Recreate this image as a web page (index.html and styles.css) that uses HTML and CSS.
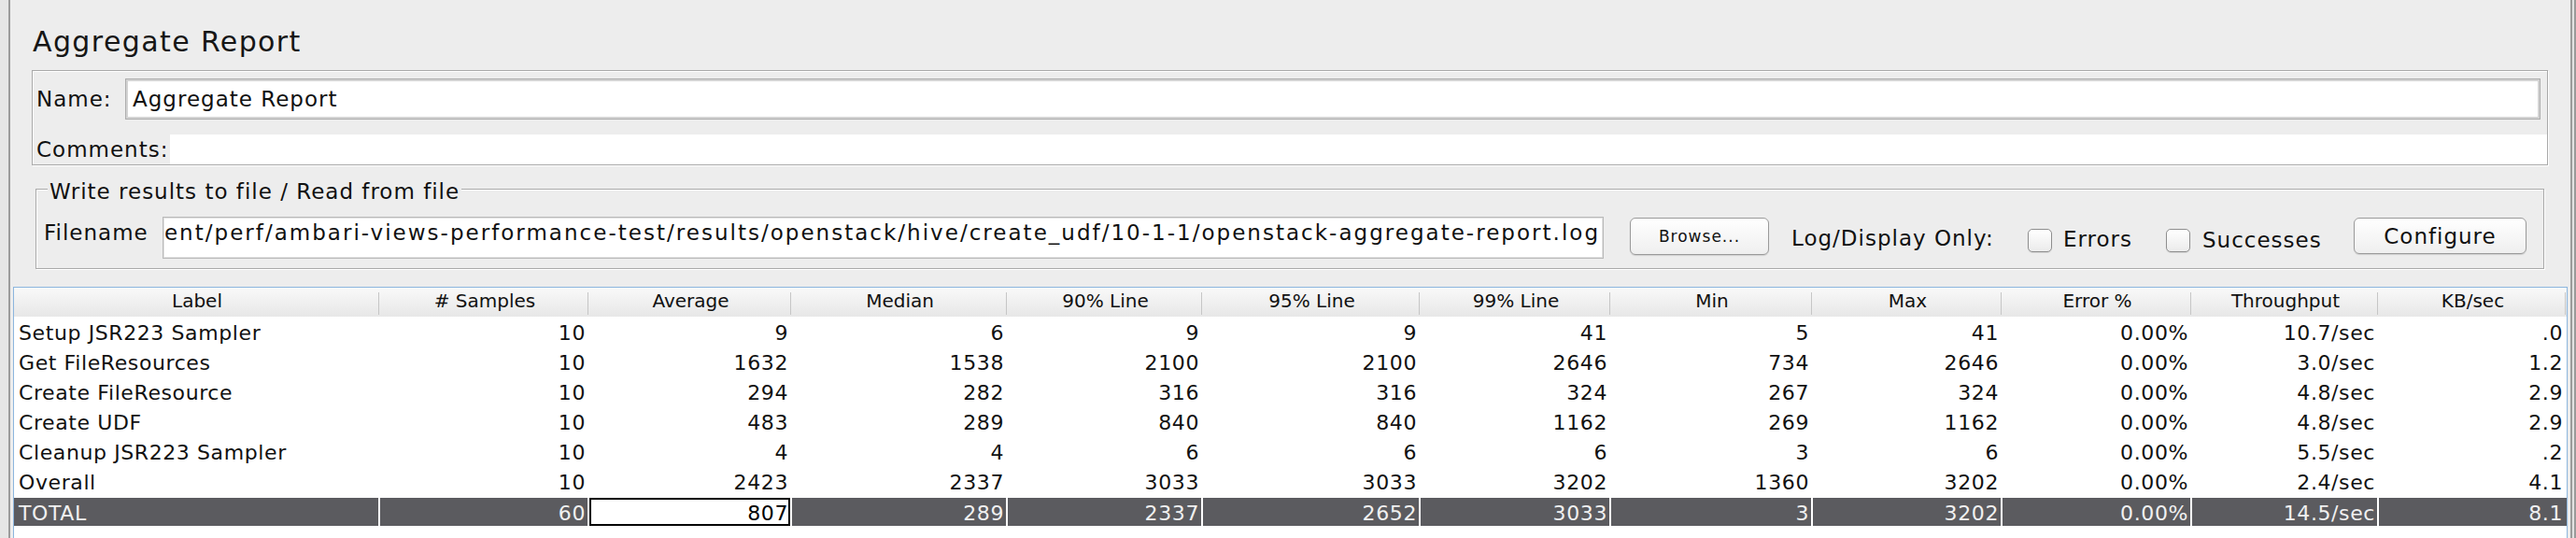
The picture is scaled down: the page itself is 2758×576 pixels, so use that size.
FILE: index.html
```html
<!DOCTYPE html>
<html lang="en">
<head>
<meta charset="utf-8">
<title>Aggregate Report</title>
<link rel="stylesheet" href="styles.css">
</head>
<body>
<div class="window">
  <div class="gutter-left"></div>
  <div class="main">
    <h1 class="title">Aggregate Report</h1>

    <div class="panel">
      <div class="name-row">
        <span class="lbl name-lbl">Name:</span>
        <div class="name-field">Aggregate Report</div>
      </div>
      <div class="comments-row">
        <span class="lbl comments-lbl">Comments:</span>
        <div class="comments-area"></div>
      </div>
    </div>

    <div class="filebox">
      <span class="legend">Write results to file / Read from file</span>
      <div class="file-row">
        <span class="lbl fn-lbl">Filename</span>
        <div class="fn-field"><span>ent/perf/ambari-views-performance-test/results/openstack/hive/create_udf/10-1-1/openstack-aggregate-report.log</span></div>
        <button class="btn browse">Browse...</button>
        <span class="lbl log-lbl">Log/Display Only:</span>
        <span class="check"></span>
        <span class="lbl chk-lbl errors">Errors</span>
        <span class="check"></span>
        <span class="lbl chk-lbl successes">Successes</span>
        <button class="btn configure">Configure</button>
      </div>
    </div>

    <div class="table-wrap">
      <table class="report">
        <colgroup>
          <col class="c1"><col class="c2"><col class="c3"><col class="c4"><col class="c5"><col class="c6">
          <col class="c7"><col class="c8"><col class="c9"><col class="c10"><col class="c11"><col class="c12">
        </colgroup>
        <thead>
          <tr>
            <th>Label</th><th># Samples</th><th>Average</th><th>Median</th><th>90% Line</th><th>95% Line</th>
            <th>99% Line</th><th>Min</th><th>Max</th><th>Error %</th><th>Throughput</th><th>KB/sec</th>
          </tr>
        </thead>
        <tbody>
          <tr><td>Setup JSR223 Sampler</td><td>10</td><td>9</td><td>6</td><td>9</td><td>9</td><td>41</td><td>5</td><td>41</td><td>0.00%</td><td>10.7/sec</td><td>.0</td></tr>
          <tr><td>Get FileResources</td><td>10</td><td>1632</td><td>1538</td><td>2100</td><td>2100</td><td>2646</td><td>734</td><td>2646</td><td>0.00%</td><td>3.0/sec</td><td>1.2</td></tr>
          <tr><td>Create FileResource</td><td>10</td><td>294</td><td>282</td><td>316</td><td>316</td><td>324</td><td>267</td><td>324</td><td>0.00%</td><td>4.8/sec</td><td>2.9</td></tr>
          <tr><td>Create UDF</td><td>10</td><td>483</td><td>289</td><td>840</td><td>840</td><td>1162</td><td>269</td><td>1162</td><td>0.00%</td><td>4.8/sec</td><td>2.9</td></tr>
          <tr><td>Cleanup JSR223 Sampler</td><td>10</td><td>4</td><td>4</td><td>6</td><td>6</td><td>6</td><td>3</td><td>6</td><td>0.00%</td><td>5.5/sec</td><td>.2</td></tr>
          <tr><td>Overall</td><td>10</td><td>2423</td><td>2337</td><td>3033</td><td>3033</td><td>3202</td><td>1360</td><td>3202</td><td>0.00%</td><td>2.4/sec</td><td>4.1</td></tr>
          <tr class="sel"><td>TOTAL</td><td>60</td><td class="focus">807</td><td>289</td><td>2337</td><td>2652</td><td>3033</td><td>3</td><td>3202</td><td>0.00%</td><td>14.5/sec</td><td>8.1</td></tr>
        </tbody>
      </table>
    </div>
  </div>
  <div class="gutter-right"></div>
</div>
</body>
</html>
```

FILE: styles.css
```css
html, body {
  margin: 0;
  padding: 0;
  height: 100%;
}

body {
  background: #ececec;
  font-family: "DejaVu Sans", "Noto Sans", sans-serif;
  color: #111;
  overflow: hidden;
}

.window {
  display: flex;
  width: 2758px;
  height: 576px;
}

.gutter-left {
  flex: none;
  width: 9px;
  background: #e6e6e6;
  border-right: 2px solid #9c9c9c;
}

.gutter-right {
  flex: none;
  width: 7px;
  background: linear-gradient(to right, #ececec 0 1px, #9a9a9a 1px 3px, #e2e2e2 3px 5px, #9a9a9a 5px 7px);
}

.main {
  flex: 1;
  min-width: 0;
  display: flex;
  flex-direction: column;
  background: #ededed;
}

.title {
  margin: 27px 0 0 24px;
  font-size: 30px;
  font-weight: normal;
  letter-spacing: 1.4px;
  line-height: 35px;
  color: #161616;
}

.lbl {
  flex: none;
  font-size: 23px;
  letter-spacing: 1px;
  line-height: 27px;
  white-space: nowrap;
}

/* Name / comments panel */
.panel {
  margin: 13px 23px 0 23px;
  border: 1px solid #a9a9a9;
  box-shadow: 1px 1px 0 #fff, inset 1px 1px 0 #fff;
  padding-top: 8px;
}

.name-row {
  display: flex;
  align-items: center;
  height: 44px;
  padding: 0 7px 0 4px;
}

.name-lbl {
  width: 95px;
}

.name-field {
  flex: 1;
  box-sizing: border-box;
  height: 44px;
  display: flex;
  align-items: center;
  padding-left: 7px;
  background: #fff;
  border: 1px solid #adadad;
  box-shadow: inset 0 0 0 2px #d3d3d3;
  font-size: 23px;
  letter-spacing: 1px;
  white-space: nowrap;
}

.comments-row {
  display: flex;
  align-items: center;
  height: 32px;
  margin-top: 16px;
  padding-left: 4px;
}

.comments-lbl {
  width: 143px;
}

.comments-area {
  flex: 1;
  align-self: stretch;
  background: #fff;
}

/* Write results to file box */
.filebox {
  margin: 25px 27px 0 27px;
  border: 1px solid #a9a9a9;
  box-shadow: 1px 1px 0 #fff, inset 1px 1px 0 #fff;
  padding: 0 18px 10px 8px;
}

.legend {
  display: block;
  width: max-content;
  margin: -11px 0 0 4px;
  padding: 0 2px;
  background: #ededed;
  font-size: 23px;
  letter-spacing: 1px;
  line-height: 27px;
}

.file-row {
  display: flex;
  align-items: flex-start;
  height: 45px;
  margin-top: 13px;
}

.fn-lbl {
  width: 127px;
  margin-top: 4px;
}

.fn-field {
  flex: 1;
  min-width: 0;
  box-sizing: border-box;
  height: 45px;
  display: flex;
  justify-content: flex-end;
  align-items: flex-start;
  overflow: hidden;
  padding: 3px 3px 0 2px;
  background: #fff;
  border: 1px solid #b9b9b9;
  box-shadow: inset 0 0 0 1px #e2e2e2;
  font-size: 23px;
  letter-spacing: 2.02px;
  line-height: 27px;
  white-space: nowrap;
}

.fn-field span {
  flex: none;
}

.btn {
  flex: none;
  box-sizing: border-box;
  padding: 0;
  font-family: inherit;
  color: #111;
  background: linear-gradient(#ffffff, #efefef);
  border: 1px solid #9a9a9a;
  border-radius: 6px;
  box-shadow: 0 1px 1px rgba(0, 0, 0, 0.12);
}

.browse {
  width: 149px;
  height: 40px;
  margin: 1px 0 0 28px;
  font-size: 17px;
  letter-spacing: 1px;
}

.log-lbl {
  width: 253px;
  margin: 10px 0 0 24px;
}

.check {
  flex: none;
  box-sizing: border-box;
  width: 26px;
  height: 25px;
  margin-top: 13px;
  border: 1px solid #8e8e8e;
  border-radius: 5px;
  background: linear-gradient(#ffffff, #ebebeb);
  box-shadow: 0 1px 1px rgba(0, 0, 0, 0.1);
}

.errors {
  width: 110px;
  margin: 11px 0 0 12px;
}

.successes {
  width: 162px;
  margin: 12px 0 0 13px;
}

.configure {
  width: 185px;
  height: 39px;
  margin-top: 1px;
  font-size: 23px;
  letter-spacing: 1px;
}

/* Results table */
.table-wrap {
  flex: 1;
  margin: 19px 2px 0 3px;
  border: 1px solid #8cb6de;
  border-bottom: none;
  background: #fff;
  overflow: hidden;
}

.report {
  width: 100%;
  table-layout: fixed;
  border-collapse: separate;
  border-spacing: 0;
}

.c1 { width: 392px; }
.c2 { width: 224px; }
.c3 { width: 217px; }
.c4 { width: 231px; }
.c5 { width: 209px; }
.c6 { width: 233px; }
.c7 { width: 204px; }
.c8 { width: 216px; }
.c9 { width: 203px; }
.c10 { width: 203px; }
.c11 { width: 200px; }
.c12 { width: 201px; }

.report th {
  height: 31px;
  box-sizing: border-box;
  padding: 2px 0 0 0;
  vertical-align: top;
  font-size: 20px;
  font-weight: normal;
  line-height: 24px;
  text-align: center;
  white-space: nowrap;
  color: #111;
  background:
    linear-gradient(#c6c6c6, #c6c6c6) no-repeat right 1px top 5px / 1px 24px,
    linear-gradient(#f9f9f9, #e7e7e7);
}

.report td {
  padding: 4px 4px 0 5px;
  vertical-align: top;
  font-size: 22px;
  letter-spacing: 0.6px;
  line-height: 28px;
  text-align: right;
  white-space: nowrap;
  overflow: hidden;
}

.report td:first-child {
  text-align: left;
}

.report tr.sel td {
  padding-top: 3px;
  padding-right: 2px;
  line-height: 27px;
  background: #5b5b5f;
  color: #f0f0f0;
  border-top: 2px solid #fff;
  border-right: 2px solid #fff;
}

.report tr.sel td:last-child {
  border-right: none;
  padding-right: 4px;
}

.report tr.sel td.focus {
  background: #fff;
  color: #000;
  box-shadow: inset 0 0 0 2px #000;
}
```
